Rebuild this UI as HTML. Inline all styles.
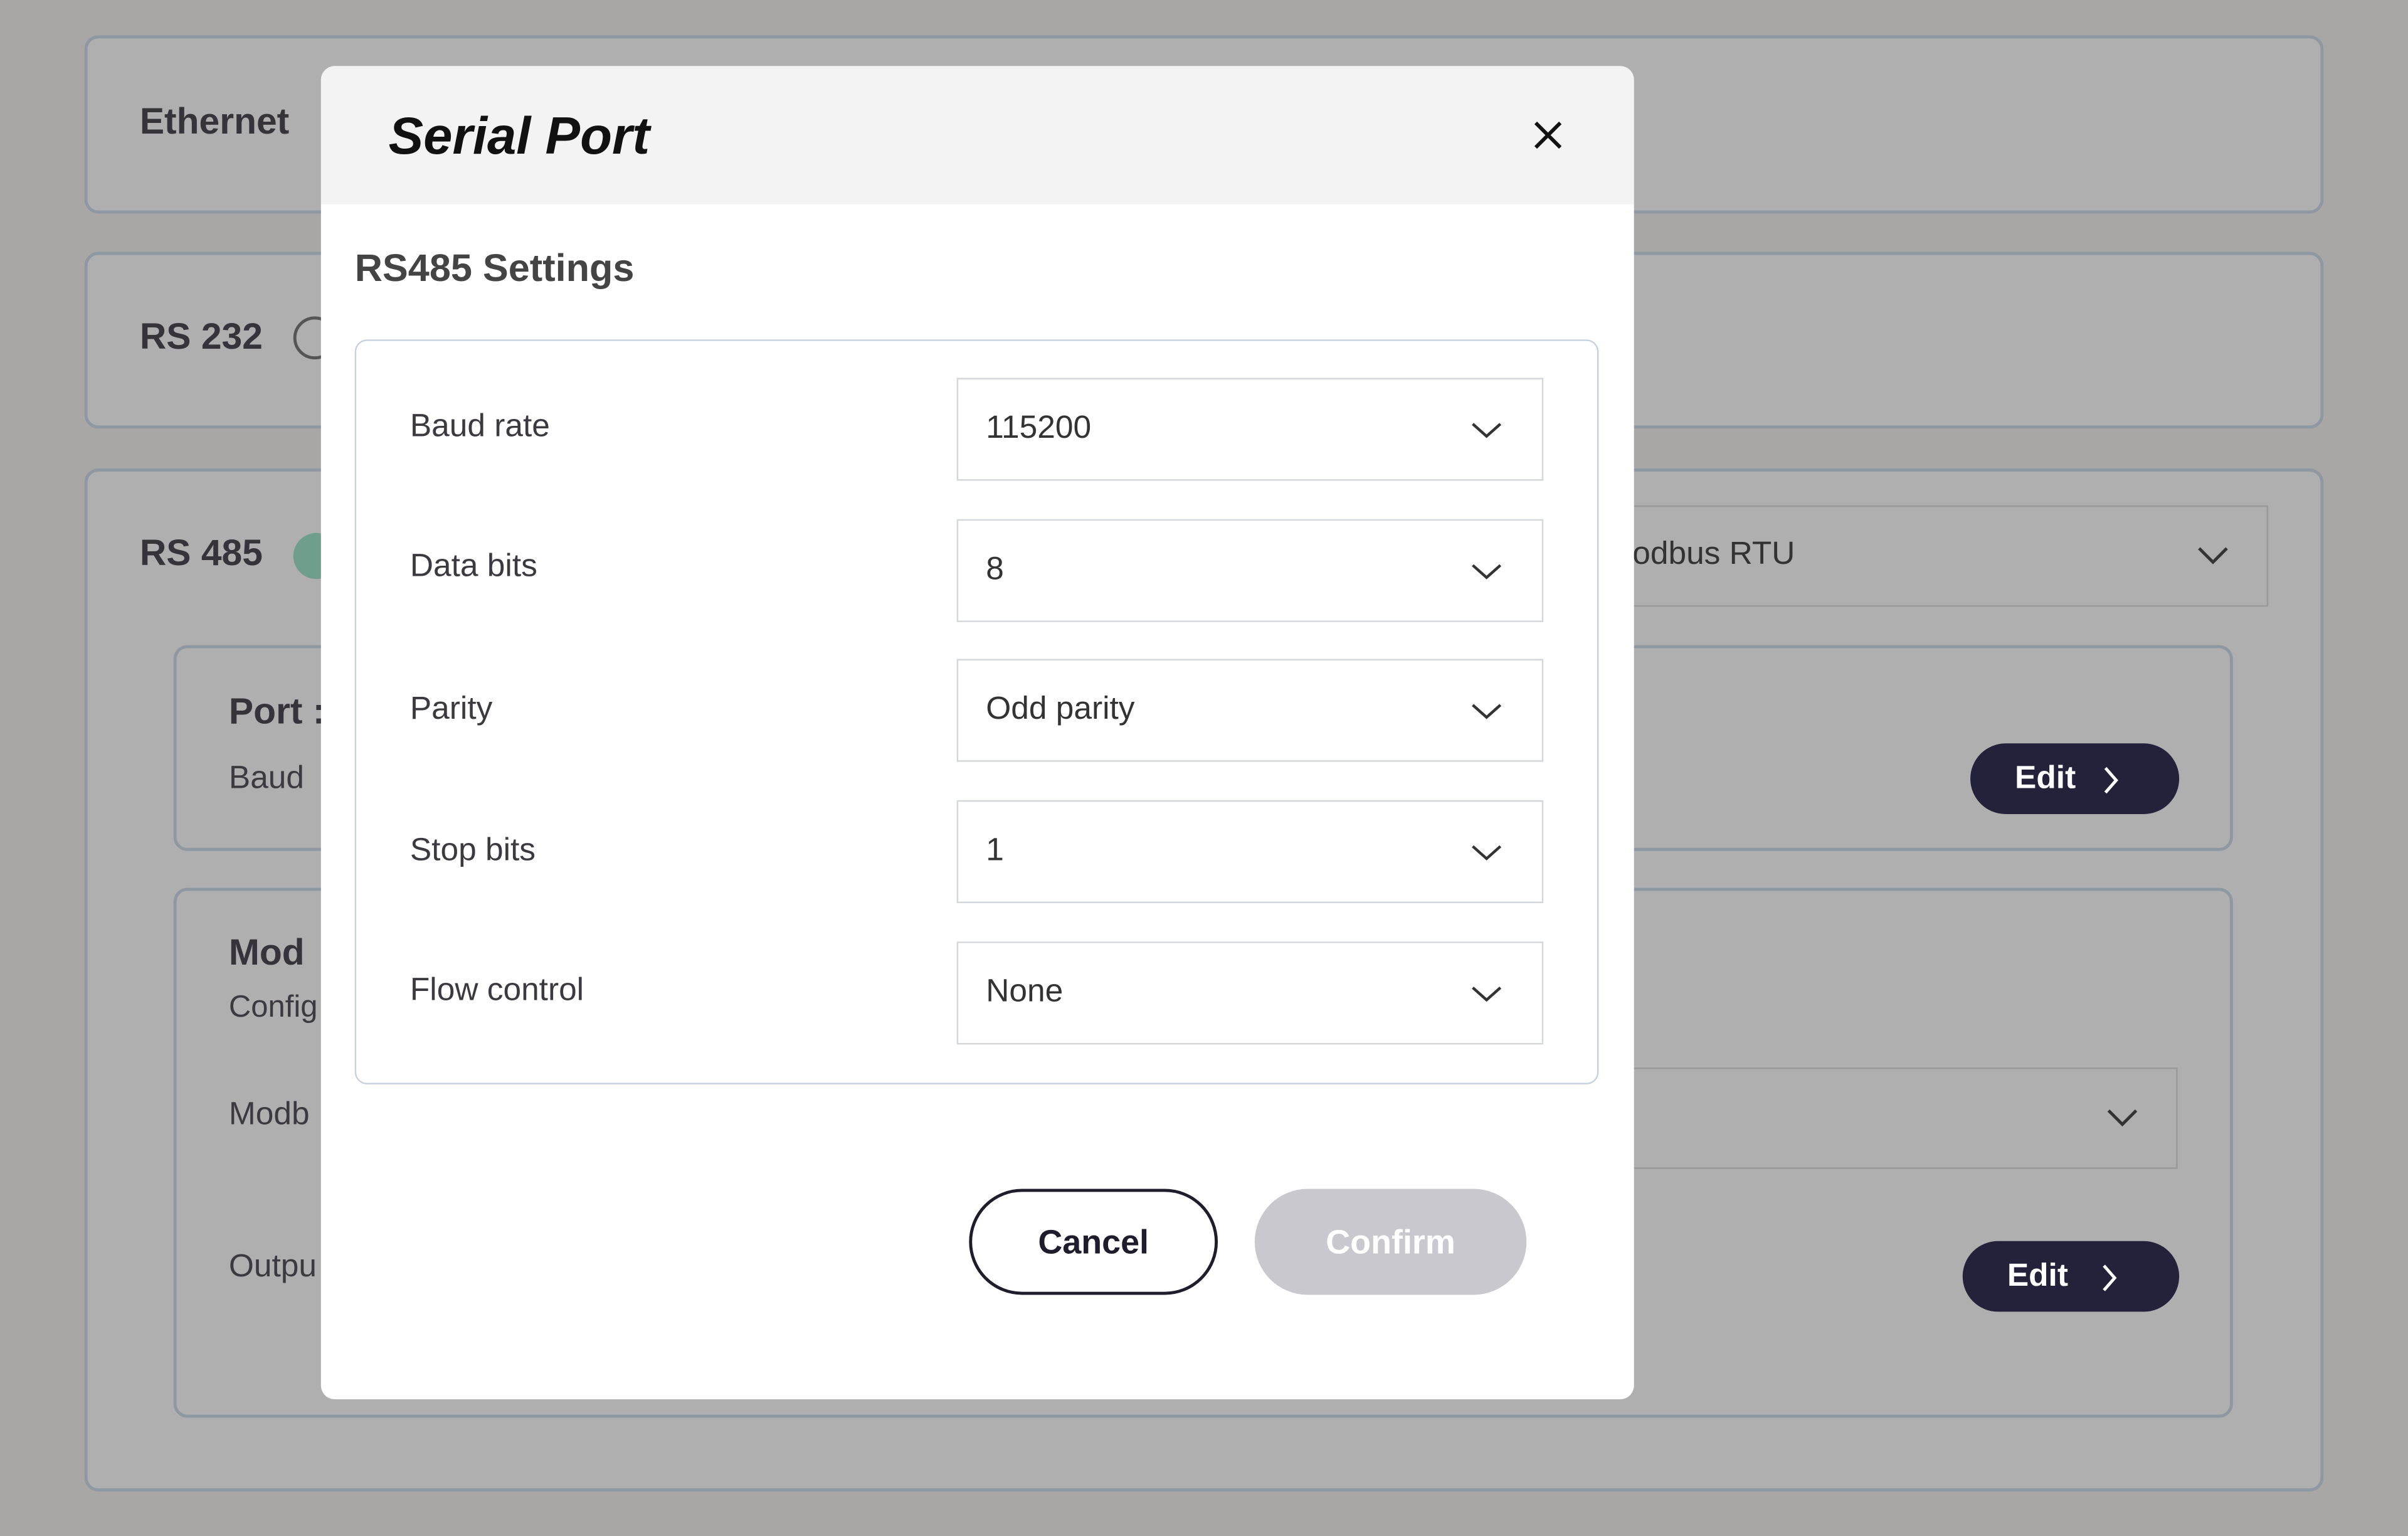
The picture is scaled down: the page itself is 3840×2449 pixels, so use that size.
<!DOCTYPE html>
<html><head><meta charset="utf-8">
<style>
html,body{margin:0;padding:0;}
body{width:3840px;height:2448px;overflow:hidden;background:#a8a7a5;font-family:"Liberation Sans",sans-serif;}
#s{position:absolute;left:0;top:0;width:1568px;height:1000px;transform:scale(2.44898);transform-origin:0 0;background:#a8a7a5;}
.a{position:absolute;box-sizing:border-box;}
.card{border:2px solid #8e98a3;border-radius:9px;background:#afafaf;}
.lbl{position:absolute;font-weight:bold;color:#36333a;font-size:24px;}
.t{position:absolute;color:#3c3940;font-size:21px;}
.sel{position:absolute;left:623px;width:382px;height:67px;border:1.5px solid #d3d6da;box-sizing:border-box;background:#fff;}
.sel span{position:absolute;left:18px;top:20px;font-size:21px;color:#333;}
.sel svg{position:absolute;right:26px;top:27px;}
.btn{position:absolute;border-radius:23px;background:#24213a;color:#fff;font-weight:bold;font-size:21px;}
</style></head><body><div id="s">
<div class="a card" style="left:55px;top:23px;width:1458px;height:116px"></div>
<div class="lbl" style="left:91px;top:66px">Ethernet</div>
<div class="a card" style="left:55px;top:164px;width:1458px;height:115px"></div>
<div class="lbl" style="left:91px;top:206px">RS 232</div>
<div class="a" style="left:191px;top:206px;width:28px;height:28px;border:2px solid #555;border-radius:50%"></div>
<div class="a card" style="left:55px;top:305px;width:1458px;height:666px"></div>
<div class="lbl" style="left:91px;top:347px">RS 485</div>
<div class="a" style="left:191px;top:347px;width:30px;height:30px;background:#6f9f8c;border-radius:50%"></div>
<div class="a" style="left:1030px;top:329px;width:447px;height:66px;border:1.5px solid #999"></div>
<div class="t" style="left:1063px;top:349px;color:#333">odbus RTU</div>
<svg class="a" style="left:1430px;top:354px" width="22" height="14"><path d="M2 3l9 9 9-9" fill="none" stroke="#333" stroke-width="2"/></svg>
<div class="a card" style="left:113px;top:420px;width:1341px;height:134px"></div>
<div class="lbl" style="left:149px;top:450px">Port :</div>
<div class="t" style="left:149px;top:495px">Baud</div>
<div class="btn" style="left:1283px;top:484px;width:136px;height:46px"><span style="position:absolute;left:29px;top:11px">Edit</span><svg style="position:absolute;left:86px;top:14px" width="12" height="20"><path d="M2 2l7 8-7 8" fill="none" stroke="#fff" stroke-width="2"/></svg></div>
<div class="a card" style="left:113px;top:578px;width:1341px;height:345px"></div>
<div class="lbl" style="left:149px;top:607px">Mod</div>
<div class="t" style="left:149px;top:645px;font-size:20px">Config</div>
<div class="t" style="left:149px;top:714px">Modb</div>
<div class="a" style="left:1030px;top:695px;width:388px;height:66px;border:1.5px solid #999"></div>
<svg class="a" style="left:1371px;top:720px" width="22" height="14"><path d="M2 3l9 9 9-9" fill="none" stroke="#333" stroke-width="2"/></svg>
<div class="t" style="left:149px;top:813px">Outpu</div>
<div class="btn" style="left:1278px;top:808px;width:141px;height:46px"><span style="position:absolute;left:29px;top:11px">Edit</span><svg style="position:absolute;left:90px;top:14px" width="12" height="20"><path d="M2 2l7 8-7 8" fill="none" stroke="#fff" stroke-width="2"/></svg></div>

<div class="a" style="left:209px;top:43px;width:855px;height:868px;background:#fff;border-radius:9px;overflow:hidden">
<div class="a" style="left:0;top:0;width:855px;height:90px;background:#f3f3f3"></div>
<div class="a" style="left:44px;top:27px;font-size:34px;font-weight:bold;font-style:italic;color:#111">Serial Port</div>
<svg class="a" style="left:789px;top:35px" width="20" height="20"><path d="M2 2l16 16M18 2L2 18" stroke="#111" stroke-width="2.4"/></svg>
<div class="a" style="left:22px;top:118px;font-size:25px;font-weight:bold;color:#444">RS485 Settings</div>
</div>
<div class="a" style="left:231px;top:221px;width:810px;height:485px;border:1.5px solid #c6d2df;border-radius:8px"></div>
<div class="t" style="left:267px;top:266px">Baud rate</div>
<div class="t" style="left:267px;top:357px">Data bits</div>
<div class="t" style="left:267px;top:450px">Parity</div>
<div class="t" style="left:267px;top:542px">Stop bits</div>
<div class="t" style="left:267px;top:633px">Flow control</div>
<div class="sel" style="top:246px"><span>115200</span><svg width="20" height="12"><path d="M1 2l9 8 9-8" fill="none" stroke="#333" stroke-width="1.8"/></svg></div>
<div class="sel" style="top:338px"><span>8</span><svg width="20" height="12"><path d="M1 2l9 8 9-8" fill="none" stroke="#333" stroke-width="1.8"/></svg></div>
<div class="sel" style="top:429px"><span>Odd parity</span><svg width="20" height="12"><path d="M1 2l9 8 9-8" fill="none" stroke="#333" stroke-width="1.8"/></svg></div>
<div class="sel" style="top:521px"><span>1</span><svg width="20" height="12"><path d="M1 2l9 8 9-8" fill="none" stroke="#333" stroke-width="1.8"/></svg></div>
<div class="sel" style="top:613px"><span>None</span><svg width="20" height="12"><path d="M1 2l9 8 9-8" fill="none" stroke="#333" stroke-width="1.8"/></svg></div>
<div class="a" style="left:631px;top:774px;width:162px;height:69px;border:2px solid #1f1c2c;border-radius:35px;text-align:center;line-height:65px;font-weight:bold;font-size:22px;color:#1f1c2c">Cancel</div>
<div class="a" style="left:817px;top:774px;width:177px;height:69px;background:#c9c8cf;border-radius:35px;text-align:center;line-height:69px;font-weight:bold;font-size:22px;color:#fff">Confirm</div>
</div></body></html>
